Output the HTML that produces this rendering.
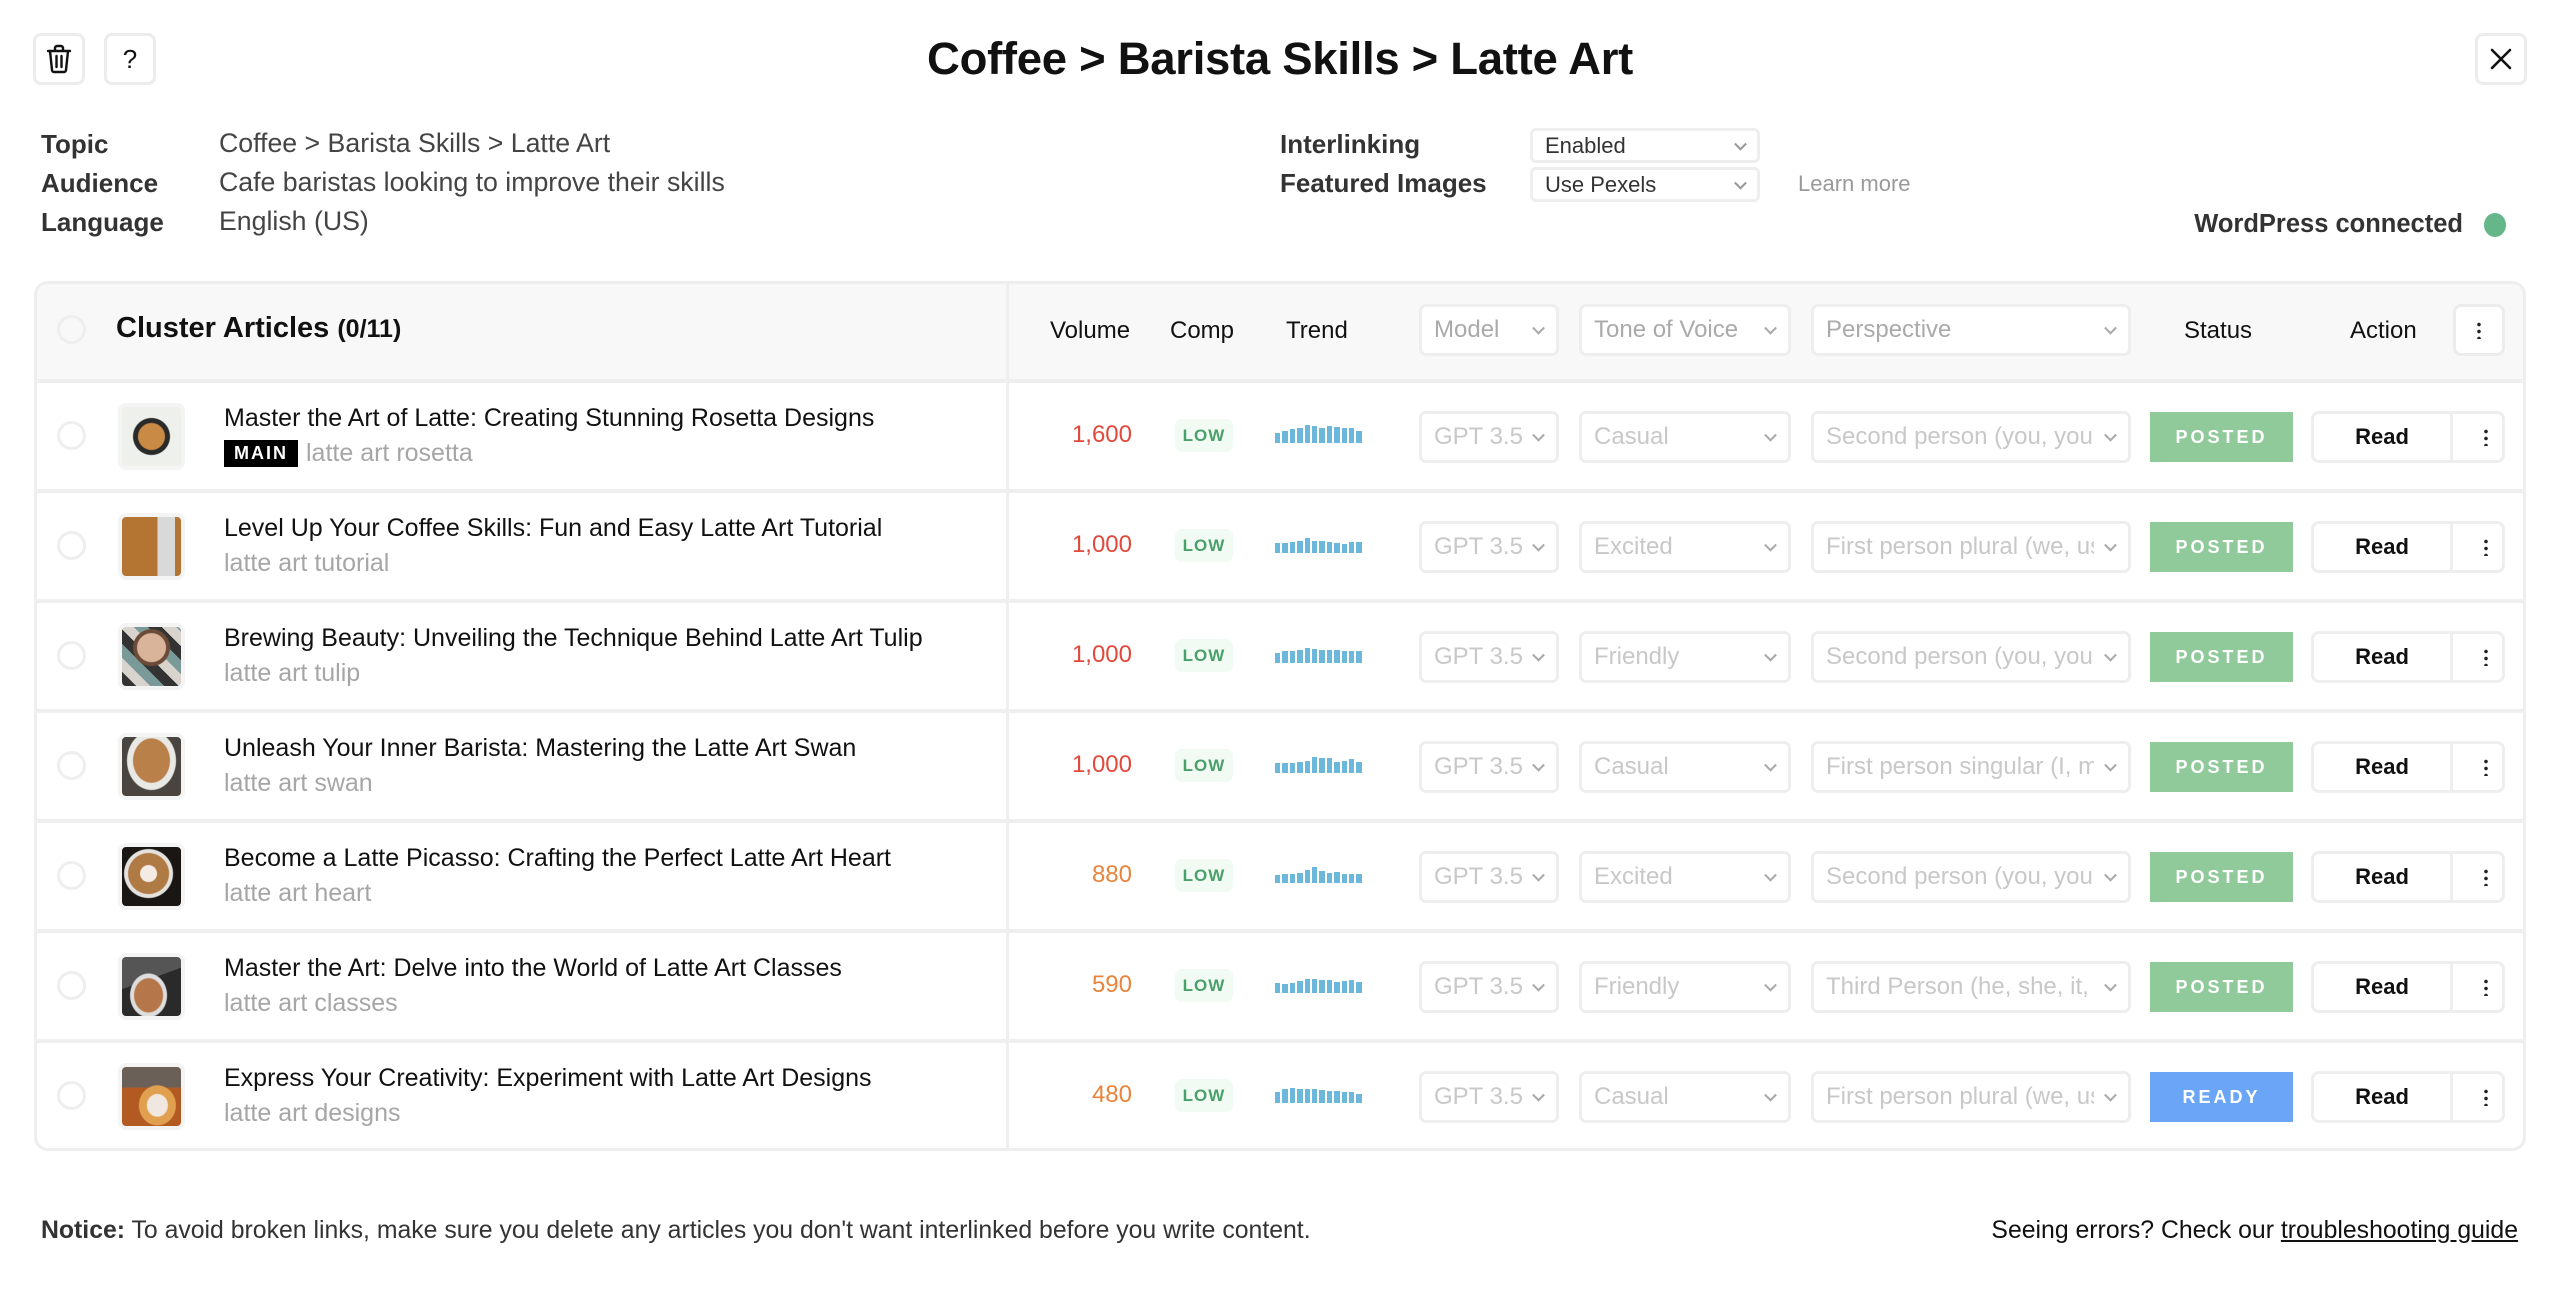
<!DOCTYPE html>
<html><head><meta charset="utf-8"><style>
*{box-sizing:border-box;margin:0;padding:0}
body{width:2560px;height:1299px;background:#fff;font-family:"Liberation Sans",sans-serif;color:#111;position:relative;overflow:hidden}
.a{position:absolute}
.btn{position:absolute;border:3px solid #ececec;border-radius:8px;background:#fff;display:flex;align-items:center;justify-content:center}
.lbl{position:absolute;font-size:26px;font-weight:bold;color:#333}
.val{position:absolute;font-size:26.7px;color:#444}
.sel{position:absolute;border:3px solid #eee;border-radius:6px;background:#fff;font-size:22px;color:#333;padding-left:12px;display:flex;align-items:center}
.sel:after{content:"";position:absolute;right:12px;top:50%;width:7px;height:7px;border-right:2px solid #999;border-bottom:2px solid #999;transform:translateY(-70%) rotate(45deg)}
.row{position:absolute;left:34px;width:2492px;height:110px;border-top:4px solid #efefef}
.cb{position:absolute;left:23px;width:29px;height:29px;border:3px solid #eee;border-radius:50%}
.th{position:absolute;left:84px;top:20px;width:67px;height:67px;border-radius:8px;border:4px solid #f4f4f4;overflow:hidden}
.t{position:absolute;left:190px;top:21px;font-size:25px;color:#111;white-space:nowrap}
.s{position:absolute;left:190px;top:56px;font-size:25px;color:#a6a6a6;white-space:nowrap}
.vol{position:absolute;right:1394px;top:38px;font-size:24px;text-align:right}
.low{position:absolute;left:1141px;top:36px;width:58px;height:33px;border-radius:7px;background:#f2faf4;color:#4aa06a;font-size:17px;font-weight:bold;display:flex;align-items:center;justify-content:center;letter-spacing:1px}
.tr{position:absolute;left:1241px;top:40px;height:20px;display:flex;align-items:flex-end;gap:2px}
.tr i{display:block;width:5.4px;background:#6bb8dc}
.rs{position:absolute;top:28px;height:52px;border:3px solid #eee;border-radius:7px;font-size:24px;color:#c8c8c8;background:#fff}
.rs span{position:absolute;left:12px;right:34px;top:0;bottom:0;display:flex;align-items:center;white-space:nowrap;overflow:hidden}
.rs:after{content:"";position:absolute;right:13px;top:50%;width:7px;height:7px;border-right:2px solid #aaa;border-bottom:2px solid #aaa;transform:translateY(-70%) rotate(45deg)}
.st{position:absolute;left:2116px;top:29px;width:143px;height:50px;color:#fff;font-weight:bold;font-size:18px;letter-spacing:3px;display:flex;align-items:center;justify-content:center}
.rd{position:absolute;left:2277px;top:28px;width:194px;height:52px;border:3px solid #eee;border-radius:8px;background:#fff}
.rd b{position:absolute;left:0;width:139px;top:0;height:46px;display:flex;align-items:center;justify-content:center;font-size:22px;border-right:3px solid #eee}
.dots{position:absolute;right:14px;top:50%;transform:translateY(-50%);width:4px;height:18px;background:radial-gradient(circle,#222 1.6px,transparent 2px) 0 0/4px 7px repeat-y}
</style></head><body>

<div class="btn" style="left:33px;top:33px;width:52px;height:52px">
<svg width="28" height="30" viewBox="0 0 28 30" fill="none" stroke="#111" stroke-width="2.4" stroke-linecap="round" stroke-linejoin="round"><path d="M3 7h22M10 7V4a2 2 0 0 1 2-2h4a2 2 0 0 1 2 2v3M5 7l2 19a2 2 0 0 0 2 2h10a2 2 0 0 0 2-2l2-19M11.5 12v11M16.5 12v11"/></svg></div>
<div class="btn" style="left:104px;top:33px;width:52px;height:52px;font-size:26px">?</div>
<div class="btn" style="left:2475px;top:33px;width:52px;height:52px">
<svg width="24" height="24" viewBox="0 0 24 24" stroke="#111" stroke-width="2.6" stroke-linecap="round"><path d="M3 3l18 18M21 3L3 21"/></svg></div>

<div class="a" style="left:0;width:2560px;top:33px;text-align:center;font-size:45.5px;font-weight:bold;letter-spacing:-0.3px">Coffee &gt; Barista Skills &gt; Latte Art</div>

<div class="lbl" style="left:41px;top:129px">Topic</div>
<div class="lbl" style="left:41px;top:168px">Audience</div>
<div class="lbl" style="left:41px;top:207px">Language</div>
<div class="val" style="left:219px;top:128px">Coffee &gt; Barista Skills &gt; Latte Art</div>
<div class="val" style="left:219px;top:167px">Cafe baristas looking to improve their skills</div>
<div class="val" style="left:219px;top:206px">English (US)</div>

<div class="lbl" style="left:1280px;top:129px">Interlinking</div>
<div class="lbl" style="left:1280px;top:168px">Featured Images</div>
<div class="sel" style="left:1530px;top:128px;width:230px;height:35px">Enabled</div>
<div class="sel" style="left:1530px;top:167px;width:230px;height:35px">Use Pexels</div>
<div class="a" style="left:1798px;top:171px;font-size:22px;color:#999">Learn more</div>
<div class="a" style="right:97px;top:210px;font-size:25.5px;color:#333;font-weight:bold">WordPress connected</div>
<div class="a" style="left:2484px;top:213px;width:22px;height:24px;border-radius:50%;background:#65b78a"></div>

<div class="a" style="left:34px;top:281px;width:2492px;height:870px;border:3px solid #eee;border-radius:14px;overflow:hidden">
 <div class="a" style="left:0;top:0;width:2492px;height:98px;background:#f8f8f8"></div>
 <div class="a" style="left:969px;top:0;width:3px;height:870px;background:#efefef"></div>
</div>

<div class="a" style="left:34px;top:281px;width:2492px;height:98px">
 <div class="cb" style="top:34px"></div>
 <div class="a" style="left:82px;top:31px;font-size:29px;font-weight:bold">Cluster Articles <span style="font-size:25px">(0/11)</span></div>
 <div class="a" style="left:1016px;top:36px;font-size:24px">Volume</div>
 <div class="a" style="left:1136px;top:36px;font-size:24px">Comp</div>
 <div class="a" style="left:1252px;top:36px;font-size:24px">Trend</div>
 <div class="rs" style="left:1385px;top:23px;width:140px;color:#aaa"><span>Model</span></div>
 <div class="rs" style="left:1545px;top:23px;width:212px;color:#aaa"><span>Tone of Voice</span></div>
 <div class="rs" style="left:1777px;top:23px;width:320px;color:#aaa"><span>Perspective</span></div>
 <div class="a" style="left:2150px;top:36px;font-size:24px">Status</div>
 <div class="a" style="left:2316px;top:36px;font-size:24px">Action</div>
 <div class="btn" style="left:2419px;top:23px;width:52px;height:52px"><div class="dots" style="right:21px"></div></div>
</div>

<div class="row" style="top:379px">
 <div class="cb" style="top:38px"></div>
 <div class="th" style="background:radial-gradient(circle at 50% 50%,#c98a45 0 13px,#2a2a2a 14px 18px,#eef0ec 19px)"></div>
 <div class="t">Master the Art of Latte: Creating Stunning Rosetta Designs</div>
 <div class="s"><span style="display:inline-block;background:#000;color:#fff;font-weight:bold;font-size:18px;letter-spacing:2px;padding:3px 10px;margin-right:8px;vertical-align:2px">MAIN</span>latte art rosetta</div>
 <div class="vol" style="color:#e0493b">1,600</div><div class="low">LOW</div>
 <div class="tr"><i style="height:10px"></i><i style="height:12px"></i><i style="height:14px"></i><i style="height:15px"></i><i style="height:18px"></i><i style="height:17px"></i><i style="height:15px"></i><i style="height:17px"></i><i style="height:16px"></i><i style="height:15px"></i><i style="height:15px"></i><i style="height:12px"></i></div>
 <div class="rs" style="left:1385px;width:140px"><span>GPT 3.5</span></div><div class="rs" style="left:1545px;width:212px"><span>Casual</span></div><div class="rs" style="left:1777px;width:320px"><span>Second person (you, your)</span></div>
 <div class="st" style="background:#90c99a">POSTED</div>
 <div class="rd"><b>Read</b><div class="dots"></div></div>
</div>
<div class="row" style="top:489px">
 <div class="cb" style="top:38px"></div>
 <div class="th" style="background:linear-gradient(90deg,#b57532 0 60%,#d9d9d9 60% 90%,#b57532 90%)"></div>
 <div class="t">Level Up Your Coffee Skills: Fun and Easy Latte Art Tutorial</div>
 <div class="s">latte art tutorial</div>
 <div class="vol" style="color:#e0493b">1,000</div><div class="low">LOW</div>
 <div class="tr"><i style="height:10px"></i><i style="height:10px"></i><i style="height:11px"></i><i style="height:12px"></i><i style="height:15px"></i><i style="height:12px"></i><i style="height:12px"></i><i style="height:11px"></i><i style="height:10px"></i><i style="height:9px"></i><i style="height:11px"></i><i style="height:11px"></i></div>
 <div class="rs" style="left:1385px;width:140px"><span>GPT 3.5</span></div><div class="rs" style="left:1545px;width:212px"><span>Excited</span></div><div class="rs" style="left:1777px;width:320px"><span>First person plural (we, us)</span></div>
 <div class="st" style="background:#90c99a">POSTED</div>
 <div class="rd"><b>Read</b><div class="dots"></div></div>
</div>
<div class="row" style="top:599px">
 <div class="cb" style="top:38px"></div>
 <div class="th" style="background:radial-gradient(circle at 50% 35%,#d9b49a 0 14px,#6b4a38 15px 18px,transparent 19px),repeating-linear-gradient(45deg,#333 0 10px,#d8d3cc 10px 20px,#7a9a9a 20px 30px)"></div>
 <div class="t">Brewing Beauty: Unveiling the Technique Behind Latte Art Tulip</div>
 <div class="s">latte art tulip</div>
 <div class="vol" style="color:#e0493b">1,000</div><div class="low">LOW</div>
 <div class="tr"><i style="height:10px"></i><i style="height:12px"></i><i style="height:12px"></i><i style="height:13px"></i><i style="height:15px"></i><i style="height:14px"></i><i style="height:13px"></i><i style="height:13px"></i><i style="height:13px"></i><i style="height:12px"></i><i style="height:12px"></i><i style="height:12px"></i></div>
 <div class="rs" style="left:1385px;width:140px"><span>GPT 3.5</span></div><div class="rs" style="left:1545px;width:212px"><span>Friendly</span></div><div class="rs" style="left:1777px;width:320px"><span>Second person (you, your)</span></div>
 <div class="st" style="background:#90c99a">POSTED</div>
 <div class="rd"><b>Read</b><div class="dots"></div></div>
</div>
<div class="row" style="top:709px">
 <div class="cb" style="top:38px"></div>
 <div class="th" style="background:radial-gradient(ellipse at 50% 40%,#b98049 0 18px,#e8e8e4 19px 24px,#4a4440 25px)"></div>
 <div class="t">Unleash Your Inner Barista: Mastering the Latte Art Swan</div>
 <div class="s">latte art swan</div>
 <div class="vol" style="color:#e0493b">1,000</div><div class="low">LOW</div>
 <div class="tr"><i style="height:10px"></i><i style="height:10px"></i><i style="height:10px"></i><i style="height:11px"></i><i style="height:12px"></i><i style="height:16px"></i><i style="height:15px"></i><i style="height:15px"></i><i style="height:11px"></i><i style="height:12px"></i><i style="height:14px"></i><i style="height:11px"></i></div>
 <div class="rs" style="left:1385px;width:140px"><span>GPT 3.5</span></div><div class="rs" style="left:1545px;width:212px"><span>Casual</span></div><div class="rs" style="left:1777px;width:320px"><span>First person singular (I, me)</span></div>
 <div class="st" style="background:#90c99a">POSTED</div>
 <div class="rd"><b>Read</b><div class="dots"></div></div>
</div>
<div class="row" style="top:819px">
 <div class="cb" style="top:38px"></div>
 <div class="th" style="background:radial-gradient(circle at 45% 45%,#f4ece4 0 8px,#b07a44 9px 20px,#e5e2de 21px 24px,#1a1614 25px)"></div>
 <div class="t">Become a Latte Picasso: Crafting the Perfect Latte Art Heart</div>
 <div class="s">latte art heart</div>
 <div class="vol" style="color:#e8843c">880</div><div class="low">LOW</div>
 <div class="tr"><i style="height:8px"></i><i style="height:9px"></i><i style="height:9px"></i><i style="height:10px"></i><i style="height:13px"></i><i style="height:16px"></i><i style="height:12px"></i><i style="height:10px"></i><i style="height:11px"></i><i style="height:9px"></i><i style="height:9px"></i><i style="height:9px"></i></div>
 <div class="rs" style="left:1385px;width:140px"><span>GPT 3.5</span></div><div class="rs" style="left:1545px;width:212px"><span>Excited</span></div><div class="rs" style="left:1777px;width:320px"><span>Second person (you, your)</span></div>
 <div class="st" style="background:#90c99a">POSTED</div>
 <div class="rd"><b>Read</b><div class="dots"></div></div>
</div>
<div class="row" style="top:929px">
 <div class="cb" style="top:38px"></div>
 <div class="th" style="background:radial-gradient(ellipse at 45% 65%,#b5764a 0 14px,#ddd 15px 18px,transparent 19px),linear-gradient(160deg,#555 0 40%,#2a2a2a 40%)"></div>
 <div class="t">Master the Art: Delve into the World of Latte Art Classes</div>
 <div class="s">latte art classes</div>
 <div class="vol" style="color:#e8843c">590</div><div class="low">LOW</div>
 <div class="tr"><i style="height:10px"></i><i style="height:9px"></i><i style="height:10px"></i><i style="height:12px"></i><i style="height:14px"></i><i style="height:14px"></i><i style="height:13px"></i><i style="height:13px"></i><i style="height:11px"></i><i style="height:12px"></i><i style="height:13px"></i><i style="height:11px"></i></div>
 <div class="rs" style="left:1385px;width:140px"><span>GPT 3.5</span></div><div class="rs" style="left:1545px;width:212px"><span>Friendly</span></div><div class="rs" style="left:1777px;width:320px"><span>Third Person (he, she, it, they)</span></div>
 <div class="st" style="background:#90c99a">POSTED</div>
 <div class="rd"><b>Read</b><div class="dots"></div></div>
</div>
<div class="row" style="top:1039px">
 <div class="cb" style="top:38px"></div>
 <div class="th" style="background:radial-gradient(ellipse at 60% 65%,#f0e8e0 0 10px,#e0a050 11px 18px,transparent 19px),linear-gradient(180deg,#6a6058 0 35%,#b25a22 35%)"></div>
 <div class="t">Express Your Creativity: Experiment with Latte Art Designs</div>
 <div class="s">latte art designs</div>
 <div class="vol" style="color:#e8843c">480</div><div class="low">LOW</div>
 <div class="tr"><i style="height:11px"></i><i style="height:14px"></i><i style="height:15px"></i><i style="height:14px"></i><i style="height:14px"></i><i style="height:14px"></i><i style="height:13px"></i><i style="height:12px"></i><i style="height:12px"></i><i style="height:11px"></i><i style="height:11px"></i><i style="height:9px"></i></div>
 <div class="rs" style="left:1385px;width:140px"><span>GPT 3.5</span></div><div class="rs" style="left:1545px;width:212px"><span>Casual</span></div><div class="rs" style="left:1777px;width:320px"><span>First person plural (we, us)</span></div>
 <div class="st" style="background:#6aa5f8">READY</div>
 <div class="rd"><b>Read</b><div class="dots"></div></div>
</div>

<div class="a" style="left:41px;top:1217px;font-size:24.8px;color:#333"><b>Notice:</b> To avoid broken links, make sure you delete any articles you don't want interlinked before you write content.</div>
<div class="a" style="right:42px;top:1217px;font-size:24.8px;color:#111">Seeing errors? Check our <span style="text-decoration:underline">troubleshooting guide</span></div>
</body></html>
